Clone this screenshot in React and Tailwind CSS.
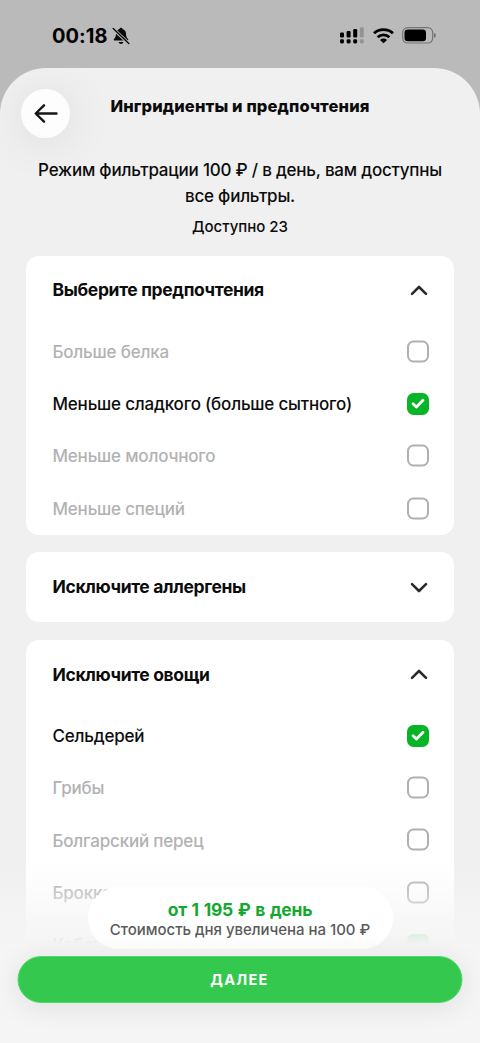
import { useState } from 'react';
import clsx from 'clsx';

const SECTIONS = [
  {
    id: 'preferences',
    title: 'Выберите предпочтения',
    open: true,
    items: [
      { label: 'Больше белка' },
      { label: 'Меньше сладкого (больше сытного)', checked: true },
      { label: 'Меньше молочного' },
      { label: 'Меньше специй' },
    ],
  },
  {
    id: 'allergens',
    title: 'Исключите аллергены',
    open: false,
    items: [],
  },
  {
    id: 'vegetables',
    title: 'Исключите овощи',
    open: true,
    items: [
      { label: 'Сельдерей', checked: true },
      { label: 'Грибы' },
      { label: 'Болгарский перец' },
      { label: 'Брокколи' },
      { label: 'Кабачок', checked: true },
    ],
  },
];

const App = () => {
  const [sections, setSections] = useState(SECTIONS);

  const toggleSection = (id) => {
    setSections(sections.map((s) => (s.id === id ? { ...s, open: !s.open } : s)));
  };

  const toggleItem = (id, label) => {
    setSections(sections.map((s) => (s.id !== id ? s : {
      ...s,
      items: s.items.map((i) => (i.label === label ? { ...i, checked: !i.checked } : i)),
    })));
  };

  return (
    <div className="relative w-[480px] h-[1043px] overflow-hidden bg-[#bababa] font-['Inter',sans-serif] text-[#0c0c0c]">
      <StatusBar />

      <div className="h-[975px] overflow-hidden rounded-t-[46px] bg-[#f0f0f0]">
        {/* Header */}
        <div className="grid grid-cols-[110px_260px_1fr] h-[89px]">
          <div className="pl-[21px] pt-[21px]">
            <button className="flex items-center justify-center size-[49px] rounded-full bg-[#fdfdfd] shadow-[0_4px_40px_10px_rgba(0,0,0,0.05)]">
              <svg width="24" height="20" viewBox="0 0 24 20" fill="none" stroke="#161616" strokeWidth="2.4" strokeLinecap="round" strokeLinejoin="round">
                <path d="M22.5 9.500H2M10 1.300L1.700 9.500L10 17.700" />
              </svg>
            </button>
          </div>
          <h1 className="flex justify-center pt-[25.5px] text-[16.5px] leading-6 font-extrabold text-center whitespace-nowrap tracking-[0.13px]">
            Ингридиенты и предпочтения
          </h1>
        </div>

        <div className="text-center">
          <p className="text-[17px] leading-[26px] font-medium tracking-[-0.22px]">
            Режим фильтрации 100 ₽ / в день, вам доступны
            <br />
            все фильтры.
          </p>
          <p className="pt-[6px] text-[15px] leading-6 font-medium tracking-[0px]">Доступно 23</p>
        </div>

        <div className="flex flex-col gap-[17.5px] px-[26px] pt-[16.5px]">
          {sections.map((section) => (
            <Section
              key={section.id}
              section={section}
              onToggle={() => toggleSection(section.id)}
              onToggleItem={(label) => toggleItem(section.id, label)}
            />
          ))}
        </div>
      </div>

      <BottomBar />
    </div>
  );
};

const StatusBar = () => (
  <div className="flex items-center justify-between h-[68px] pl-[52px] pr-[44px] pt-[4px] text-black">
    <div className="flex items-center gap-[4px]">
      <span className="text-[20px] leading-6 font-bold tracking-[0.05px]">00:18</span>
      <svg width="18" height="18" viewBox="0 0 18 18">
        <path d="M9 .8c.9 0 1.500.6 1.600 1.300 2.100.6 3.300 2.300 3.400 4.500 0 3 .8 4.200 2 5.400.6.7.3 1.600-.7 1.600H2.700c-1 0-1.300-.9-.7-1.600 1.200-1.200 2-2.400 2-5.400.1-2.200 1.300-3.900 3.400-4.500C7.500 1.400 8.100.8 9 .8z" fill="#0b0b0b" />
        <path d="M6.600 14.900h4.800c-.2 1.300-1.200 2-2.400 2s-2.200-.7-2.400-2z" fill="#0b0b0b" />
        <path d="M.8 1.500L17 16.700" stroke="#bababa" strokeWidth="3.200" />
        <path d="M1.200 1.600L16.800 16.400" stroke="#0b0b0b" strokeWidth="1.400" strokeLinecap="round" />
      </svg>
    </div>

    <div className="flex items-center gap-[8.500px] -mt-px">
      {/* Signal */}
      <svg width="24" height="17" viewBox="0 0 24 17">
        <g fill="#000">
          <rect x="0" y="5.500" width="4" height="5" rx="1.200" />
          <rect x="6.600" y="4" width="4" height="6.500" rx="1.200" />
          <rect x="13.200" y="2" width="4" height="8.500" rx="1.200" />
          <rect x="0" y="12.300" width="4" height="4.200" rx="1.400" />
          <rect x="6.600" y="12.300" width="4" height="4.200" rx="1.400" />
          <rect x="13.200" y="12.300" width="4" height="4.200" rx="1.400" />
        </g>
        <g fill="#949494">
          <rect x="19.800" y="0.200" width="4" height="10.300" rx="1.200" />
          <rect x="19.800" y="12.300" width="4" height="4.200" rx="1.400" />
        </g>
      </svg>
      {/* Wi-Fi */}
      <svg width="21" height="16" viewBox="0 0 21 16" fill="none" stroke="#000" strokeWidth="2.900">
        <path d="M1 5.300C6.300.4 14.700.4 20 5.300" />
        <path d="M4.600 9.200C8 6.100 13 6.100 16.400 9.200" />
        <path d="M7 11.900C9 10.100 12 10.100 14 11.900L10.500 15.300z" fill="#000" stroke="none" />
      </svg>
      {/* Battery */}
      <svg width="34" height="17" viewBox="0 0 34 17">
        <rect x="0.700" y="0.700" width="30" height="15.300" rx="4.800" fill="none" stroke="#747474" strokeWidth="1.200" />
        <rect x="2.500" y="2.500" width="21.500" height="11.700" rx="3.200" fill="#000" />
        <path d="M32 6c1.300.3 1.900 1.300 1.900 2.400s-.6 2.100-1.900 2.400z" fill="#747474" />
      </svg>
    </div>
  </div>
);

const Section = ({ section, onToggle, onToggleItem }) => (
  <section className="rounded-[13px] bg-white pl-[26.5px] pr-[25px]">
    <button onClick={onToggle} className="flex items-center justify-between w-full h-[70px]">
      <h2 className="text-[17.5px] font-[650] tracking-[-0.35px]">{section.title}</h2>
      <Chevron up={section.open} />
    </button>
    {section.open && section.items.map((item) => (
      <button
        key={item.label}
        onClick={() => onToggleItem(item.label)}
        className="flex items-center justify-between w-full h-[52.3px]"
      >
        <span className={clsx('pt-[2px] text-[17px] font-[540] tracking-[-0.2px]', item.checked ? 'text-[#0c0c0c]' : 'text-[#b2b2b2]')}>
          {item.label}
        </span>
        <Checkbox checked={item.checked} />
      </button>
    ))}
  </section>
);

const Chevron = ({ up }) => (
  <svg
    width="18"
    height="12"
    viewBox="0 0 18 12"
    className={clsx('mr-[1px]', !up && 'rotate-180')}
    fill="none"
    stroke="#2a2a2a"
    strokeWidth="2.600"
    strokeLinecap="round"
    strokeLinejoin="round"
  >
    <path d="M2 8.900L9 2L16 8.900" />
  </svg>
);

const Checkbox = ({ checked }) => {
  if (!checked) {
    return <span className="size-[22px] -translate-y-[0.5px] rounded-[6.500px] border-2 border-[#b0b0b0]" />;
  }
  return (
    <span className="flex items-center justify-center size-[22px] rounded-[6.500px] bg-[#06b526]">
      <svg width="14" height="11" viewBox="0 0 14 11" fill="none" stroke="#fff" strokeWidth="2.800" strokeLinecap="round" strokeLinejoin="round">
        <path d="M2 5.700L5.400 9L12 2.300" />
      </svg>
    </span>
  );
};

// Fixed footer: price pill and the main button over a fading backdrop
const BottomBar = () => (
  <div className="absolute inset-x-0 bottom-0 flex flex-col items-center h-[183px] pt-[27px] bg-[linear-gradient(to_bottom,rgba(245,245,245,0)_0px,rgba(245,245,245,0.3)_30px,rgba(245,245,245,0.78)_62px,rgba(245,245,245,0.9)_74px,#f5f5f5_84px)]">
    <div className="flex flex-col items-center w-[305px] h-[62px] pt-[13px] rounded-full bg-white">
      <p className="text-[17.5px] leading-5 font-bold tracking-[-0.22px] [word-spacing:0.8px] text-[#15a82f]">от 1 195 ₽ в день</p>
      <p className="text-[15px] leading-[19px] font-medium tracking-[-0.03px] text-[#5a5a5a] whitespace-nowrap">
        Стоимость дня увеличена на 100 ₽
      </p>
    </div>
    <button className="w-[445px] h-[47px] mt-[7px] -translate-x-[0.5px] rounded-full border border-[#4bdc68] bg-[#34c84f] text-[14.500px] font-bold tracking-[1.300px] text-white shadow-[0_4px_28px_2px_rgba(0,0,0,0.08)]">
      ДАЛЕЕ
    </button>
  </div>
);

export default App;
